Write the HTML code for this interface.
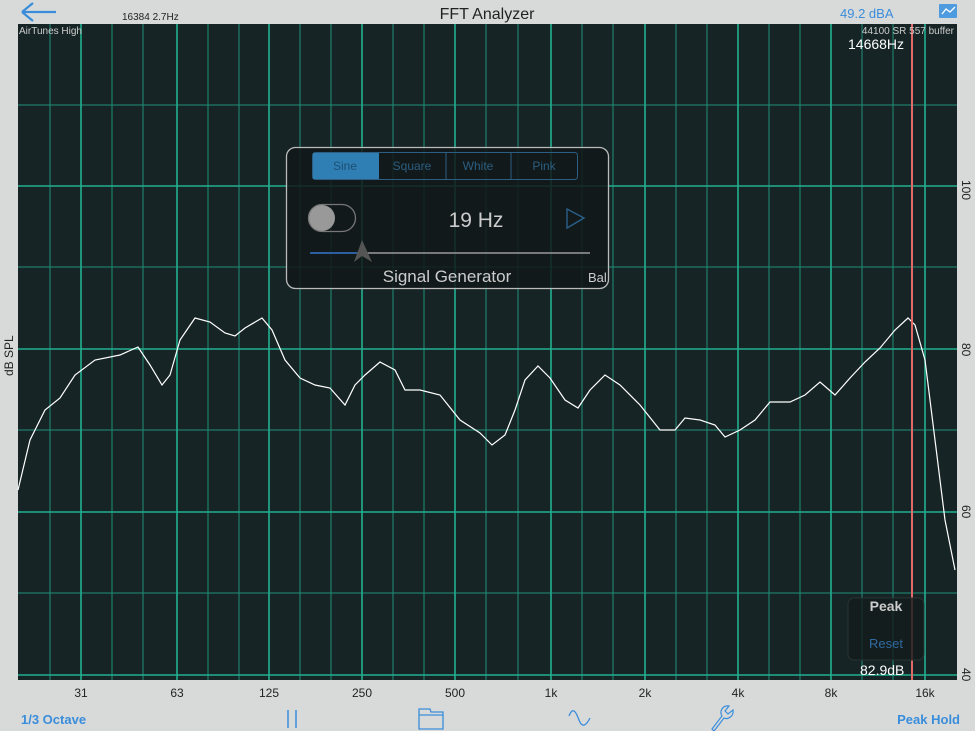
<!DOCTYPE html>
<html><head><meta charset="utf-8"><style>
body{margin:0;width:975px;height:731px;background:#d8dada;position:relative;overflow:hidden;font-family:"Liberation Sans",sans-serif}
.a{position:absolute}
</style></head><body>
<svg class="a" style="left:0;top:0" width="975" height="731">
<!-- top bar -->
<path d="M22 12 H56 M22 12 L33 3 M22 12 L33 21" stroke="#3a8ddb" stroke-width="2.2" fill="none"/>
<text x="122" y="20" font-size="10" fill="#222">16384  2.7Hz</text>
<text x="487" y="19" font-size="16" fill="#222" text-anchor="middle">FFT Analyzer</text>
<text x="840" y="18" font-size="13" fill="#3a8ddb">49.2 dBA</text>
<rect x="939" y="4" width="18" height="14" fill="#4f9be0" rx="1"/>
<path d="M942 14 L946 9 L950 12 L955 7" stroke="#fff" stroke-width="1.3" fill="none"/>
<!-- plot -->
<rect x="18" y="24" width="939" height="656" fill="#172426"/>
<g stroke="#1c8f78" stroke-width="1">
<line x1="18" y1="105" x2="957" y2="105"/><line x1="18" y1="267" x2="957" y2="267"/><line x1="18" y1="430" x2="957" y2="430"/><line x1="18" y1="593" x2="957" y2="593"/>
<line x1="50" y1="24" x2="50" y2="680"/><line x1="112" y1="24" x2="112" y2="680"/><line x1="143" y1="24" x2="143" y2="680"/><line x1="208" y1="24" x2="208" y2="680"/><line x1="239" y1="24" x2="239" y2="680"/><line x1="300" y1="24" x2="300" y2="680"/><line x1="331" y1="24" x2="331" y2="680"/><line x1="393" y1="24" x2="393" y2="680"/><line x1="424" y1="24" x2="424" y2="680"/><line x1="486" y1="24" x2="486" y2="680"/><line x1="518" y1="24" x2="518" y2="680"/><line x1="582" y1="24" x2="582" y2="680"/><line x1="613" y1="24" x2="613" y2="680"/><line x1="676" y1="24" x2="676" y2="680"/><line x1="707" y1="24" x2="707" y2="680"/><line x1="769" y1="24" x2="769" y2="680"/><line x1="800" y1="24" x2="800" y2="680"/><line x1="862" y1="24" x2="862" y2="680"/><line x1="893" y1="24" x2="893" y2="680"/>
</g>
<g stroke="#22b08f" stroke-width="1.6">
<line x1="18" y1="186" x2="957" y2="186"/><line x1="18" y1="349" x2="957" y2="349"/><line x1="18" y1="512" x2="957" y2="512"/><line x1="18" y1="675" x2="957" y2="675"/>
<line x1="81" y1="24" x2="81" y2="680"/><line x1="177" y1="24" x2="177" y2="680"/><line x1="269" y1="24" x2="269" y2="680"/><line x1="362" y1="24" x2="362" y2="680"/><line x1="455" y1="24" x2="455" y2="680"/><line x1="551" y1="24" x2="551" y2="680"/><line x1="645" y1="24" x2="645" y2="680"/><line x1="738" y1="24" x2="738" y2="680"/><line x1="831" y1="24" x2="831" y2="680"/><line x1="925" y1="24" x2="925" y2="680"/>
</g>
<polyline fill="none" stroke="#fff" stroke-width="1.2" points="18,490 30,440 45,410 60,398 75,375 95,360 120,355 138,347 150,365 162,385 170,375 180,340 195,318 210,322 225,333 235,336 245,328 262,318 272,330 285,360 300,378 315,385 330,388 345,405 355,385 365,375 380,362 395,370 405,390 420,390 440,395 460,420 480,433 492,445 505,435 515,410 525,380 538,366 550,378 565,400 578,408 590,390 605,375 620,385 640,405 660,430 675,430 685,418 700,420 715,425 725,437 740,430 755,420 770,402 790,402 805,395 820,382 835,395 850,378 865,362 880,348 895,330 908,318 915,325 925,360 935,440 945,520 955,570"/>
<line x1="912" y1="24" x2="912" y2="680" stroke="#e06a6a" stroke-width="2"/>
<text x="19" y="34" font-size="10" fill="#ccc">AirTunes High</text>
<text x="954" y="34" font-size="10" fill="#ccc" text-anchor="end">44100 SR 557 buffer</text>
<text x="848" y="49" font-size="14" fill="#fff">14668Hz</text>
<!-- peak box -->
<rect x="848" y="598" width="76" height="62" rx="6" fill="#141c1d" fill-opacity=".8" stroke="#2a3233"/>
<text x="886" y="611" font-size="14" font-weight="bold" fill="#ccc" text-anchor="middle">Peak</text>
<text x="886" y="648" font-size="13" fill="#2f6aa0" text-anchor="middle">Reset</text>
<text x="860" y="675" font-size="14" fill="#fff">82.9dB</text>
<!-- axis labels -->
<g font-size="12" fill="#222" text-anchor="middle">
<text x="81" y="697">31</text><text x="177" y="697">63</text><text x="269" y="697">125</text><text x="362" y="697">250</text><text x="455" y="697">500</text><text x="551" y="697">1k</text><text x="645" y="697">2k</text><text x="738" y="697">4k</text><text x="831" y="697">8k</text><text x="925" y="697">16k</text>
</g>
<g font-size="12" fill="#222">
<text transform="translate(962,180) rotate(90)">100</text>
<text transform="translate(962,343) rotate(90)">80</text>
<text transform="translate(962,505) rotate(90)">60</text>
<text transform="translate(962,668) rotate(90)">40</text>
<text transform="translate(13,376) rotate(-90)">dB SPL</text>
</g>
<!-- toolbar -->
<text x="21" y="724" font-size="13" font-weight="bold" fill="#3a8ddb">1/3 Octave</text>
<text x="960" y="724" font-size="13" font-weight="bold" fill="#3a8ddb" text-anchor="end">Peak Hold</text>
<path d="M288 710 V728 M296 710 V728" stroke="#3a8ddb" stroke-width="1.5"/>
<path d="M419 709 H430 L431 712 H443 V729 H419 Z M419 715 H443" stroke="#3a8ddb" stroke-width="1.3" fill="none"/>
<path d="M569 716 C573 706 576 712 579 720 C582 728 586 726 590 718" stroke="#3a8ddb" stroke-width="1.3" fill="none"/>
<path d="M712 729 L722 716 C719 711 723 705 729 706 L725 711 L728 714 L733 710 C734 716 728 720 724 718 L714 731 Z" stroke="#3a8ddb" stroke-width="1.2" fill="none"/>
<!-- signal generator panel -->
<rect x="286.5" y="147.5" width="322" height="141" rx="9" fill="#121819" fill-opacity=".85" stroke="#bbb" stroke-width="1.3"/>
<rect x="312.5" y="152.5" width="265" height="27" rx="3" fill="none" stroke="#2b5e80"/>
<rect x="313" y="153" width="66" height="26" fill="#2f7fb5"/>
<path d="M446 153 V179 M511 153 V179" stroke="#2b5e80"/>
<g font-size="12" text-anchor="middle"><text x="345" y="170" fill="#1d4f73">Sine</text><text x="412" y="170" fill="#2b5e80">Square</text><text x="478" y="170" fill="#2b5e80">White</text><text x="544" y="170" fill="#2b5e80">Pink</text></g>
<rect x="308.5" y="204.5" width="47" height="27" rx="13.5" fill="none" stroke="#777" stroke-width="1.3"/>
<circle cx="322" cy="218" r="13" fill="#999"/>
<text x="476" y="227" font-size="21" fill="#ccc" text-anchor="middle">19 Hz</text>
<path d="M567 209 L584 218 L567 228 Z" fill="none" stroke="#2a5f8a" stroke-width="1.4"/>
<line x1="310" y1="253" x2="362" y2="253" stroke="#2c5ea0" stroke-width="2"/>
<line x1="362" y1="253" x2="590" y2="253" stroke="#999" stroke-width="1.5"/>
<path d="M362 240 L372 262 L362 256 L354 262 Z" fill="#555"/>
<text x="447" y="282" font-size="17" fill="#ccc" text-anchor="middle">Signal Generator</text>
<text x="588" y="282" font-size="13" fill="#ccc">Bal</text>
</svg>
</body></html>
